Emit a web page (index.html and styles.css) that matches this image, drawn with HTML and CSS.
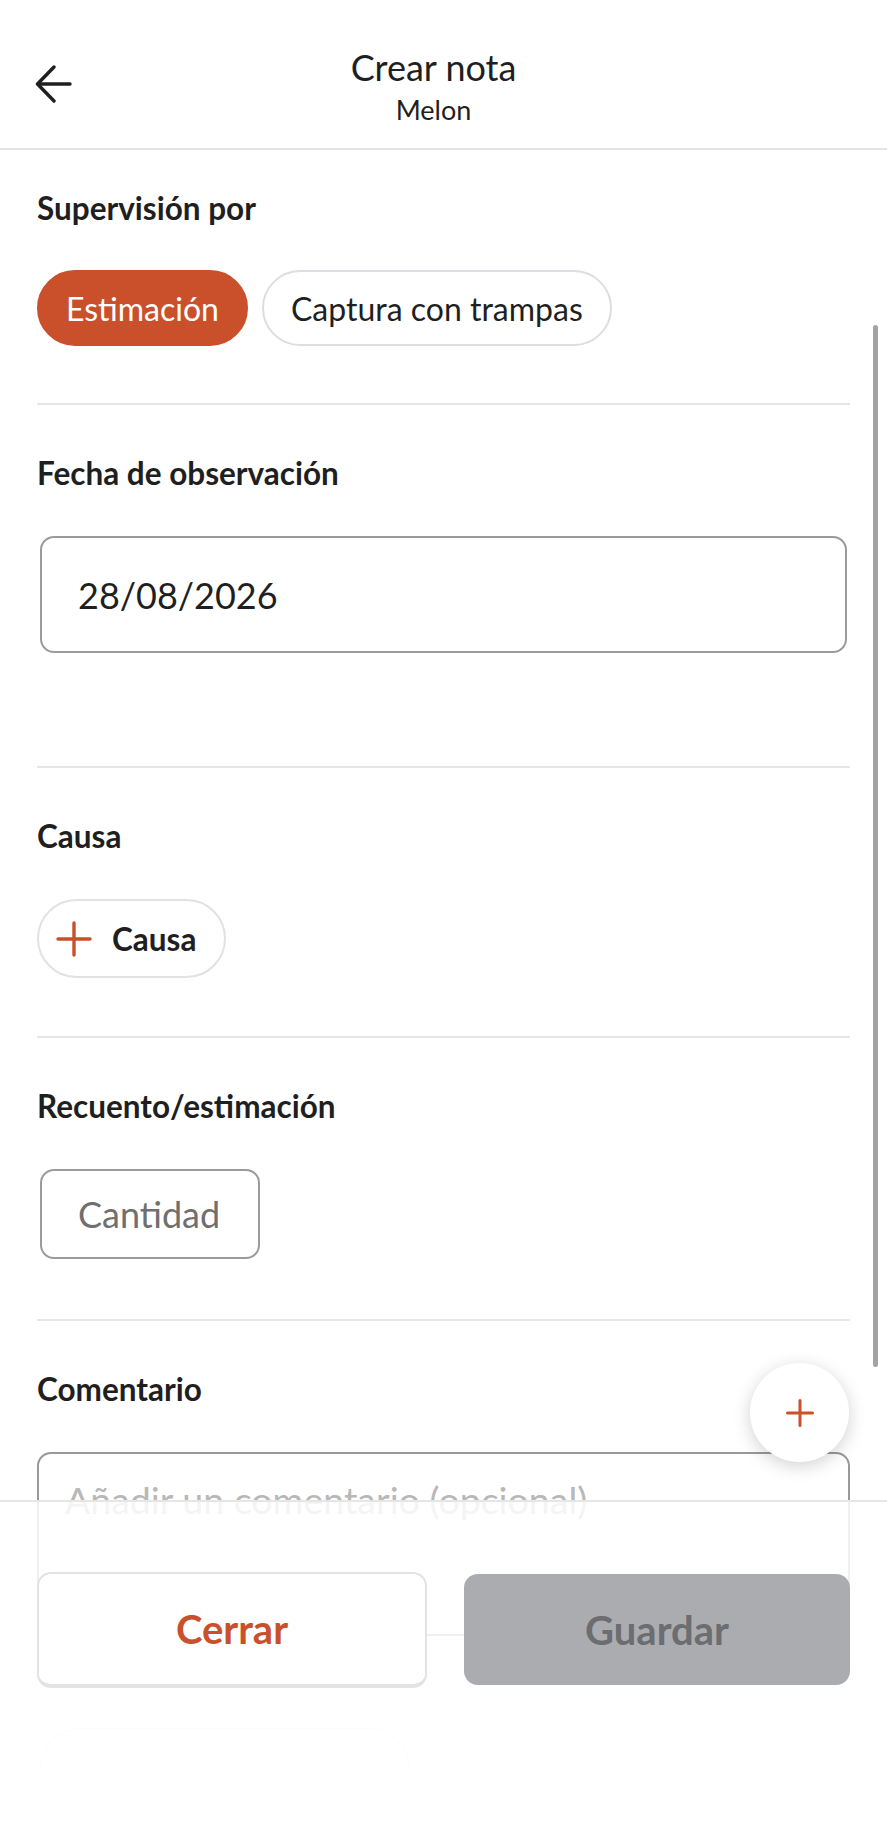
FILE: index.html
```html
<!DOCTYPE html>
<html lang="es">
<head>
<meta charset="utf-8">
<title>Crear nota</title>
<link rel="stylesheet" href="styles.css">
</head>
<body>
<div class="screen">
  <header class="topbar">
    <button class="back" aria-label="Atrás">
      <svg width="38" height="38" viewBox="0 0 38 38" fill="none" stroke="#1f1f1f" stroke-width="3.4" stroke-linecap="round" stroke-linejoin="round">
        <path d="M35 19H3"/>
        <path d="M19 2L2.5 19L19 36"/>
      </svg>
    </button>
    <div class="titles">
      <div class="title">Crear nota</div>
      <div class="subtitle">Melon</div>
    </div>
    <div></div>
  </header>

  <main class="form">
    <section class="field first">
      <h2 class="label">Supervisión por</h2>
      <div class="chips">
        <span class="chip active">Estimación</span>
        <span class="chip">Captura con trampas</span>
      </div>
    </section>

    <section class="field date-field">
      <h2 class="label">Fecha de observación</h2>
      <input class="text-input date" type="text" value="28/08/2026">
    </section>

    <section class="field cause-field">
      <h2 class="label">Causa</h2>
      <button class="add-btn">
        <svg width="36" height="36" viewBox="0 0 36 36" stroke="#c9502a" stroke-width="3.4" stroke-linecap="round">
          <path d="M18 2V34"/><path d="M2 18H34"/>
        </svg>
        <span>Causa</span>
      </button>
    </section>

    <section class="field count-field">
      <h2 class="label">Recuento/estimación</h2>
      <input class="text-input qty" type="text" placeholder="Cantidad">
    </section>

    <section class="field last">
      <h2 class="label">Comentario</h2>
      <textarea class="comment" placeholder="Añadir un comentario (opcional)"></textarea>
    </section>
  </main>

  <div class="scrollbar"></div>

  <button class="fab" aria-label="Añadir">
    <svg width="28" height="28" viewBox="0 0 28 28" stroke="#c9502a" stroke-width="3" stroke-linecap="round">
      <path d="M14 1.5V26.5"/><path d="M1.5 14H26.5"/>
    </svg>
  </button>

  <footer class="actions">
    <div class="btn-row">
      <button class="btn btn-close">Cerrar</button>
      <button class="btn btn-save">Guardar</button>
    </div>
    <div class="ghost"></div>
  </footer>
</div>
</body>
</html>
```

FILE: styles.css
```css
* { box-sizing: border-box; }

html, body {
  margin: 0;
  padding: 0;
  background: #ffffff;
}

body {
  font-family: "Lato", "Noto Sans", sans-serif;
  color: #1f1f1f;
}

.screen {
  position: relative;
  width: 887px;
  height: 1834px;
  overflow: hidden;
  background: #ffffff;
}

/* Header */
.topbar {
  display: grid;
  grid-template-columns: 100px 1fr 120px;
  height: 150px;
  border-bottom: 2px solid #e4e4e4;
}

.back {
  border: 0;
  background: none;
  padding: 65px 0 0 35px;
  margin: 0;
  align-self: start;
  text-align: left;
  cursor: pointer;
}

.back svg { display: block; }

.titles {
  display: flex;
  flex-direction: column;
  align-items: center;
  padding-top: 46px;
}

.title {
  font-size: 36px;
  line-height: 42px;
  font-weight: 400;
  color: #1f1f1f;
}

.subtitle {
  margin-top: 7px;
  font-size: 27px;
  line-height: 30px;
  color: #1f1f1f;
}

/* Form */
.form {
  padding: 0 37px;
}

.field {
  padding-top: 48px;
  border-bottom: 2px solid #e6e6e6;
}

.field.first {
  padding-top: 38px;
  padding-bottom: 57px;
}

.field.last {
  border-bottom: 0;
}

.label {
  margin: 0 0 43px;
  font-size: 31.5px;
  line-height: 40px;
  font-weight: 700;
  color: #1f1f1f;
}

.field.first .label { margin-bottom: 42px; }

.chips {
  display: flex;
  gap: 14px;
}

.chip {
  display: inline-flex;
  align-items: center;
  height: 76px;
  padding: 0 27px;
  border-radius: 38px;
  border: 2px solid #dedde2;
  font-size: 32px;
  color: #1f1f1f;
  background: #ffffff;
}

.chip.active {
  background: #c9502a;
  border-color: #c9502a;
  color: #ffffff;
}

.date-field { padding-bottom: 113px; }

.text-input {
  display: block;
  margin: 0 3px;
  border: 2px solid #9b9b9b;
  border-radius: 14px;
  background: #ffffff;
  font-family: "Lato", "Noto Sans", sans-serif;
  font-size: 36px;
  color: #1f1f1f;
  outline: none;
}

.text-input.date {
  width: 807px;
  height: 117px;
  padding: 0 0 0 36px;
}

.text-input.qty {
  width: 220px;
  height: 90px;
  padding: 0 0 0 36px;
}

.text-input::placeholder { color: #6f6f6f; }

.cause-field { padding-bottom: 58px; }

.add-btn {
  display: inline-flex;
  align-items: center;
  gap: 20px;
  height: 79px;
  padding: 0 28px 0 17px;
  border: 2px solid #e2e2e2;
  border-radius: 40px;
  background: #ffffff;
  font-family: "Lato", "Noto Sans", sans-serif;
  font-size: 31.5px;
  font-weight: 700;
  color: #1f1f1f;
  cursor: pointer;
}

.add-btn svg { display: block; }

.count-field { padding-bottom: 60px; }

.comment {
  display: block;
  width: 813px;
  height: 184px;
  margin: 0;
  padding: 22px 26px;
  border: 2px solid #999999;
  border-radius: 14px;
  resize: none;
  font-family: "Lato", "Noto Sans", sans-serif;
  font-size: 37.5px;
  line-height: 48px;
  color: #1f1f1f;
  outline: none;
}

.comment::placeholder { color: #b8b8b8; }

/* Overlays */
.scrollbar {
  position: absolute;
  left: 873px;
  top: 325px;
  width: 5px;
  height: 1042px;
  border-radius: 3px;
  background: #a3a3a3;
}

.fab {
  position: absolute;
  left: 750px;
  top: 1363px;
  width: 99px;
  height: 99px;
  border: 0;
  border-radius: 50%;
  background: #ffffff;
  box-shadow: 0 4px 18px rgba(0, 0, 0, 0.18);
  display: flex;
  align-items: center;
  justify-content: center;
  padding: 0;
  cursor: pointer;
}

.fab svg { display: block; }

.actions {
  position: absolute;
  left: 0;
  right: 0;
  top: 1500px;
  bottom: 0;
  padding: 70px 37px 0;
  border-top: 2px solid #e6e6e6;
  background: rgba(255, 255, 255, 0.84);
}

.btn-row {
  display: flex;
  gap: 37px;
  align-items: flex-start;
}

.btn {
  flex: 1;
  height: 116px;
  border-radius: 14px;
  font-family: "Lato", "Noto Sans", sans-serif;
  font-size: 40px;
  font-weight: 700;
  cursor: pointer;
}

.btn-close {
  background: #ffffff;
  border: 2px solid #e3e3e3;
  border-bottom-width: 4px;
  color: #c9502a;
}

.btn-save {
  margin-top: 2px;
  height: 111px;
  border: 0;
  background: #abacaf;
  color: #6c6d70;
}

.ghost {
  margin: 40px 0 0 3px;
  width: 370px;
  height: 40px;
  border: 1px solid #fcfcfc;
  border-bottom: 0;
  border-radius: 40px 40px 0 0;
}
```
